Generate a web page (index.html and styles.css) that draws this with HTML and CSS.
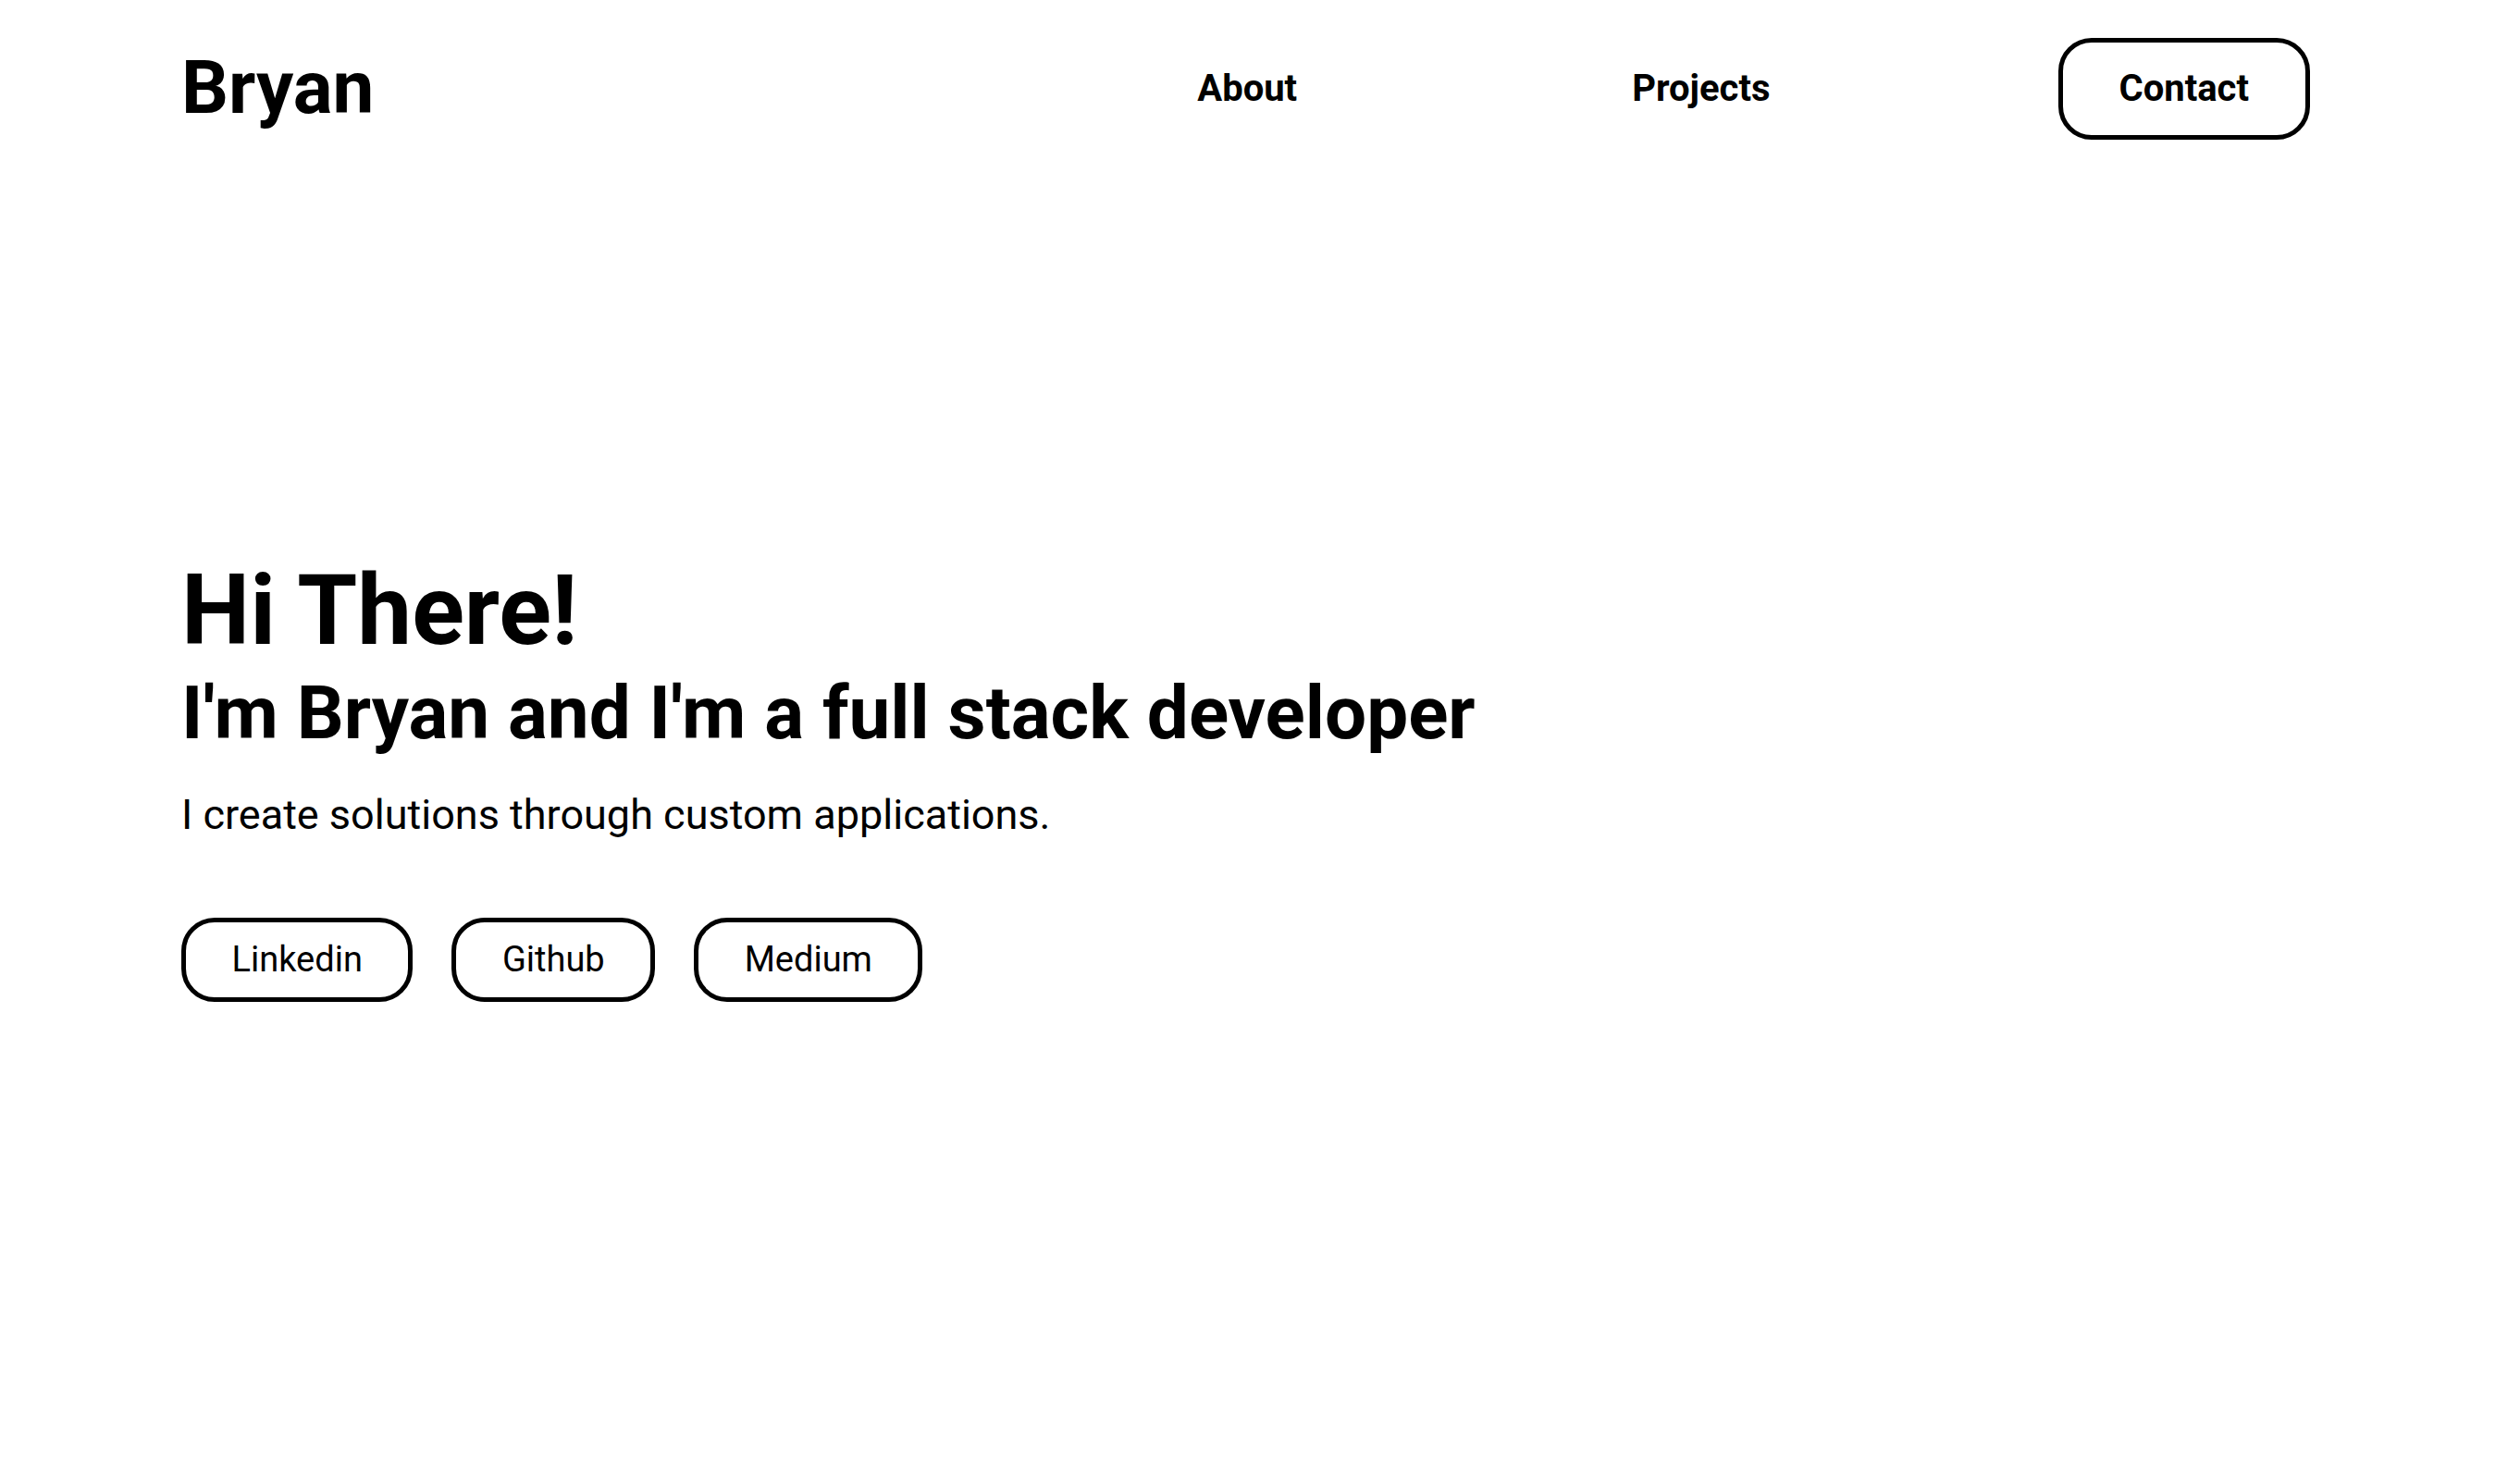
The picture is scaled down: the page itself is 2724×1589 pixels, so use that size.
FILE: index.html
```html
<!DOCTYPE html>
<html lang="en">
<head>
<meta charset="utf-8">
<title>Bryan</title>
<link rel="stylesheet" href="styles.css">
</head>
<body>
<header class="header">
  <a class="logo" href="#">Bryan</a>
  <nav class="nav">
    <a class="nav-link nav-about" href="#about">About</a>
    <a class="nav-link nav-projects" href="#projects">Projects</a>
    <a class="nav-contact" href="#contact">Contact</a>
  </nav>
</header>
<main class="hero">
  <h1 class="hero-title">Hi There!</h1>
  <h2 class="hero-subtitle">I'm Bryan and I'm a full stack developer</h2>
  <p class="hero-text">I create solutions through custom applications.</p>
  <div class="hero-links">
    <a class="pill" href="#">Linkedin</a>
    <a class="pill" href="#">Github</a>
    <a class="pill" href="#">Medium</a>
  </div>
</main>
</body>
</html>
```
FILE: styles.css
```css
* { box-sizing: border-box; }
html, body {
  margin: 0;
  padding: 0;
  background: #fff;
  color: #000;
  font-family: Roboto, "Liberation Sans", Arial, sans-serif;
}
a { color: #000; text-decoration: none; }

.header {
  display: flex;
  align-items: center;
  padding: 41px 227px 0 196px;
  height: 151px;
}
.logo {
  font-size: 80px;
  font-weight: 700;
  line-height: 1.172;
}
.nav {
  margin-left: auto;
  display: flex;
  align-items: center;
}
.nav-link {
  font-size: 40px;
  font-weight: 700;
  line-height: 48px;
}
.nav-projects { margin-left: 362px; }
.nav-contact {
  margin-left: 311px;
  font-size: 40px;
  font-weight: 700;
  line-height: 48px;
  padding: 26px 61px;
  border: 5px solid #000;
  border-radius: 36px;
}

.hero {
  padding: 447px 196px 0 196px;
}
.hero-title {
  margin: 0;
  font-size: 105px;
  font-weight: 700;
  line-height: 125px;
}
.hero-subtitle {
  margin: 0;
  font-size: 80px;
  font-weight: 700;
  line-height: 97px;
}
.hero-text {
  margin: 35px 0 0;
  font-size: 45px;
  font-weight: 400;
  line-height: 1.172;
}
.hero-links {
  margin-top: 84px;
  display: flex;
  gap: 42px;
}
.pill {
  font-size: 38px;
  font-weight: 400;
  line-height: 45px;
  padding: 18px 49.5px;
  border: 5px solid #000;
  border-radius: 36px;
}
```
